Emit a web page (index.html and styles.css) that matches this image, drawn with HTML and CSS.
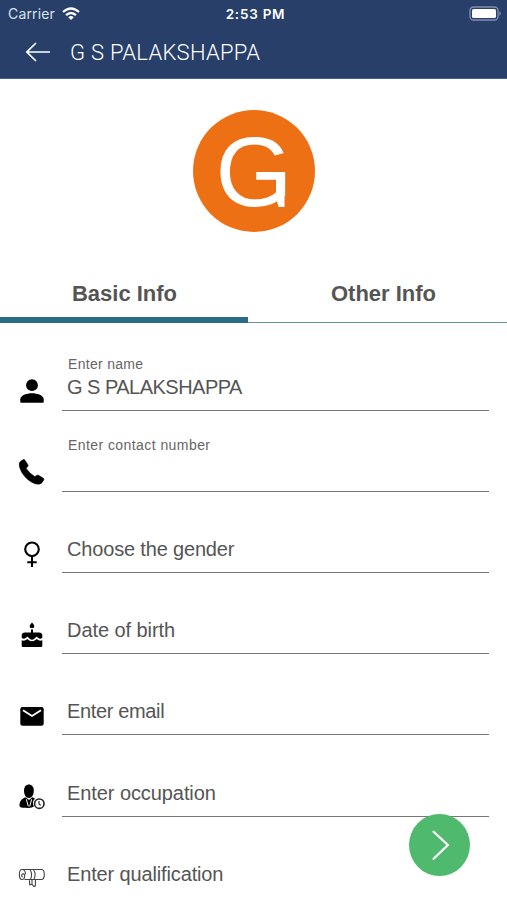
FILE: index.html
```html
<!DOCTYPE html>
<html lang="en">
<head>
<meta charset="utf-8">
<title>Profile</title>
<link rel="stylesheet" href="styles.css">
</head>
<body>
<main class="screen">
  <header class="header">
    <div class="status">
      <div class="carrier"><span>Carrier</span>
        <svg class="wifi" viewBox="0 0 18 13" fill="none" stroke="#fff" stroke-width="2.2"><path d="M1 5Q9-2 17 5M4 8.2Q9 3.800 14 8.200"/><path d="M6.200 10.200Q9 8 11.800 10.200L9 13Z" fill="#fff" stroke="none"/></svg>
      </div>
      <div class="time">2:53 PM</div>
      <svg class="battery" viewBox="0 0 33 15"><rect x="1" y="1" width="28" height="13" rx="3.500" fill="none" stroke="#8490ad" stroke-width="1.300"/><rect x="3" y="3" width="24" height="9" rx="1.500" fill="#fff"/><path d="M30.400 5.200q3 2.300 0 4.600z" fill="#8490ad"/></svg>
    </div>
    <div class="titlebar">
      <svg class="back" viewBox="0 0 26 20" fill="none" stroke="#fff" stroke-width="1.700"><path d="M25 10H1.500M11 1 1.800 10 11 19"/></svg>
      <h1 class="title">G S PALAKSHAPPA</h1>
    </div>
  </header>
  <section class="profile"><div class="avatar"><span class="initial">G</span></div></section>
  <nav class="tabs">
    <div class="tab active"><span class="basic">Basic Info</span></div>
    <div class="tab"><span class="other">Other Info</span></div>
  </nav>
  <form class="form">
    <div class="row">
      <svg class="icon" viewBox="0 0 30 30"><circle cx="15" cy="9.200" r="5.900"/><path d="M3.300 26v-2.700c0-4 6.700-6 11.700-6s11.700 2 11.700 6V26q0 .8-.8.8H4.100q-.8 0-.8-.8z"/></svg>
      <div class="field"><span class="label name-label">Enter name</span><span class="value name">G S PALAKSHAPPA</span></div>
    </div>
    <div class="row">
      <svg class="icon" viewBox="0 0 30 30"><path d="M2.600 5.800Q3 4.300 6.200 2.700q1.100-.5 1.700.5l2.900 4.500q.6 1-.2 1.900l-1.500 1.800q3.500 5.200 8.700 8.300l2.100-1.300q.9-.6 1.800 0l4.600 2.900q1 .7.4 1.600-1.600 3.300-3.700 4-4.300 1-9.300-2.300C8.500 21 4.400 16 2.800 10.500q-.8-3-.2-4.700z" stroke="#000" stroke-width=".7"/></svg>
      <div class="field"><span class="label contact-label">Enter contact number</span></div>
    </div>
    <div class="row">
      <svg class="icon" viewBox="0 0 30 30" fill="none" stroke="#000" stroke-width="2.100"><circle cx="15" cy="10.300" r="6.800"/><path d="M15 17.100V28M10.300 23.300h9.400"/></svg>
      <div class="field"><span class="value gender">Choose the gender</span></div>
    </div>
    <div class="row">
      <svg class="icon" viewBox="0 0 30 30"><path d="M15 2.600c2 2.300 2.600 3.100 2.200 4.500-.6 1.600-3.800 1.600-4.400 0-.4-1.400.2-2.200 2.200-4.500zM14 9.500h2v3h6q3.300 0 3.300 3.300v1.700q-1.800 2.700-4.600 0l-1-1-2.400 2.200q-2.300 2-4.600 0l-2.400-2.200-1 1q-2.800 2.700-4.600 0v-1.700q0-3.300 3.300-3.300h6zM4.700 20.200q2.800 1.300 5.600-1.300 4.700 4.500 9.400 0 2.800 2.600 5.600 1.300v5.600q0 1.200-1.200 1.200H5.900q-1.200 0-1.200-1.200z"/></svg>
      <div class="field"><span class="value birth">Date of birth</span></div>
    </div>
    <div class="row">
      <svg class="icon" viewBox="0 0 30 30"><rect x="3.300" y="6" width="23.400" height="18.800" rx="2.200"/><path d="M6 9.300l9 5.700 9-5.700" fill="none" stroke="#fff" stroke-width="1.900"/></svg>
      <div class="field"><span class="value email">Enter email</span></div>
    </div>
    <div class="row">
      <svg class="icon" viewBox="0 0 30 30"><path d="M7 8.500c0-8 9.800-8 9.800 0 0 4-1.800 7.500-4.900 7.500S7 12.500 7 8.500z"/><path d="M8.500 15.300 12 18l3.500-2.700 2.500 1.200q-3.500 3.500-1.200 8.200-4 1.500-8 1.100-6.300 0-6.300-1.900c0-4.500 1.500-6.500 6-8.600z"/><path d="M9.300 17.200l2 7.200M14.700 17.200l-2 7.200" stroke="#fff" stroke-width="1"/><circle cx="22.300" cy="21.700" r="4.700" fill="#fff" stroke="#222" stroke-width="1.600"/><path d="M22 19v3l1.700 1.200" fill="none" stroke="#222" stroke-width="1.100"/></svg>
      <div class="field"><span class="value occupation">Enter occupation</span></div>
    </div>
    <div class="row last">
      <svg class="icon" viewBox="0 0 30 30" fill="none" stroke="#444" stroke-width="1.100"><path d="M5 6.500h19.500c3.700 0 3.700 10 0 10H7.500M5 6.500c-3.500 0-3.500 10 0 10 3 0 3.700-5.500 1-5.700-1.700 0-1.700 3-.2 3M5 6.500c2.500 0 3.500 2.500 3.500 5"/><path d="M12.800 6.500q3.500 4.800.5 10M16.300 6.500q3.500 4.800.5 10"/><path d="M12.500 17.300l.2 4.500 2.300-.5 2 2.200 1.400-.7v-6.500M15 16.300v5"/></svg>
      <div class="field"><span class="value qualification">Enter qualification</span></div>
    </div>
  </form>
  <div class="next" role="button"><svg viewBox="0 0 62 62" fill="none" stroke="#fff" stroke-width="2.300" stroke-linecap="round"><path d="M25 17.500 39.500 31 25 45"/></svg></div>
</main>
</body>
</html>
```

FILE: styles.css
```css
* { box-sizing: border-box; }
body {
  margin: 0;
  background: #fff;
  font-family: "Liberation Sans", Arial, sans-serif;
  color: #555;
}
.screen { position: relative; height: 900px; overflow: hidden; }
.header {
  height: 79px;
  background: #273f69;
  color: #fff;
  border-bottom: 1px solid #3d6187;
}
.status {
  display: grid;
  grid-template-columns: 1fr auto 1fr;
  align-items: center;
  height: 27px;
  padding: 0 5px 0 8px;
  font-family: Inter, sans-serif;
}
.carrier { display: flex; align-items: center; gap: 7px; font-size: 14px; letter-spacing: 0.15px; color: #dce2ee; }
.wifi { width: 18px; height: 13px; }
.time { padding-left: 1px; font-size: 13.5px; font-weight: 600; letter-spacing: 0.75px; }
.battery { width: 33px; height: 15px; justify-self: end; }
.titlebar { display: flex; align-items: center; height: 50px; padding-left: 25px; }
.back { width: 26px; height: 20px; }
.title {
  margin: 1px 0 0 19px;
  font: 300 22px/50px Roboto, sans-serif;
  letter-spacing: 0.28px;
  color: #fff;
  white-space: nowrap;
}
.profile { height: 185px; padding-top: 31px; }
.avatar {
  position: relative;
  width: 122px;
  height: 122px;
  margin: 0 auto;
  border-radius: 50%;
  background: #ee7014;
  color: #fff;
  text-align: center;
}
/* Spur on the right of the initial */
.avatar::after {
  content: "";
  position: absolute;
  left: 83px;
  top: 62px;
  width: 9px;
  height: 35px;
  background: #fff;
  clip-path: polygon(0 0, 100% 0, 100% 100%, 35% 100%, 0 70%);
}
.initial { margin-left: 1px; font-size: 99px; line-height: 123px; }
.tabs { display: flex; height: 59px; }
.tab {
  flex: 1;
  padding-top: 13px;
  border-bottom: 1.5px solid #668fa8;
  text-align: center;
  font-size: 22px;
  line-height: 33px;
  font-weight: 700;
}
.tab.active { flex: 0 0 248px; border-bottom: 6px solid #2c6b86; }
.basic { margin-left: 1px; }
.other { margin-left: 12px; }
.form { padding-top: 6.5px; }
.row {
  display: grid;
  grid-template-columns: 62px 427px;
  height: 81.2px;
  align-items: end;
}
.icon { width: 30px; height: 30px; margin: 0 0 4.5px 16.5px; }
.field {
  display: flex;
  flex-direction: column;
  justify-content: flex-end;
  align-items: flex-start;
  height: 60px;
  padding: 0 0 11px 5px;
  border-bottom: 1px solid #777;
  white-space: nowrap;
}
.last .field { border-bottom-color: transparent; }
.label { margin-left: 1px; font-size: 14px; line-height: 18px; color: #666; }
.value { font-size: 20px; line-height: 24px; }
.name-label { margin-bottom: 1.5px; letter-spacing: 0.3px; }
.contact-label { margin-bottom: 25.5px; letter-spacing: 0.43px; }
.name { letter-spacing: -0.52px; }
.gender { letter-spacing: -0.17px; }
.birth { letter-spacing: -0.06px; }
.email { letter-spacing: -0.35px; }
.occupation { letter-spacing: -0.08px; }
.qualification { letter-spacing: -0.14px; }
.next {
  position: absolute;
  left: 409px;
  top: 814px;
  width: 61px;
  height: 62px;
  border-radius: 50%;
  background: #4fb96d;
}
.next svg { display: block; width: 61px; height: 62px; }
```
